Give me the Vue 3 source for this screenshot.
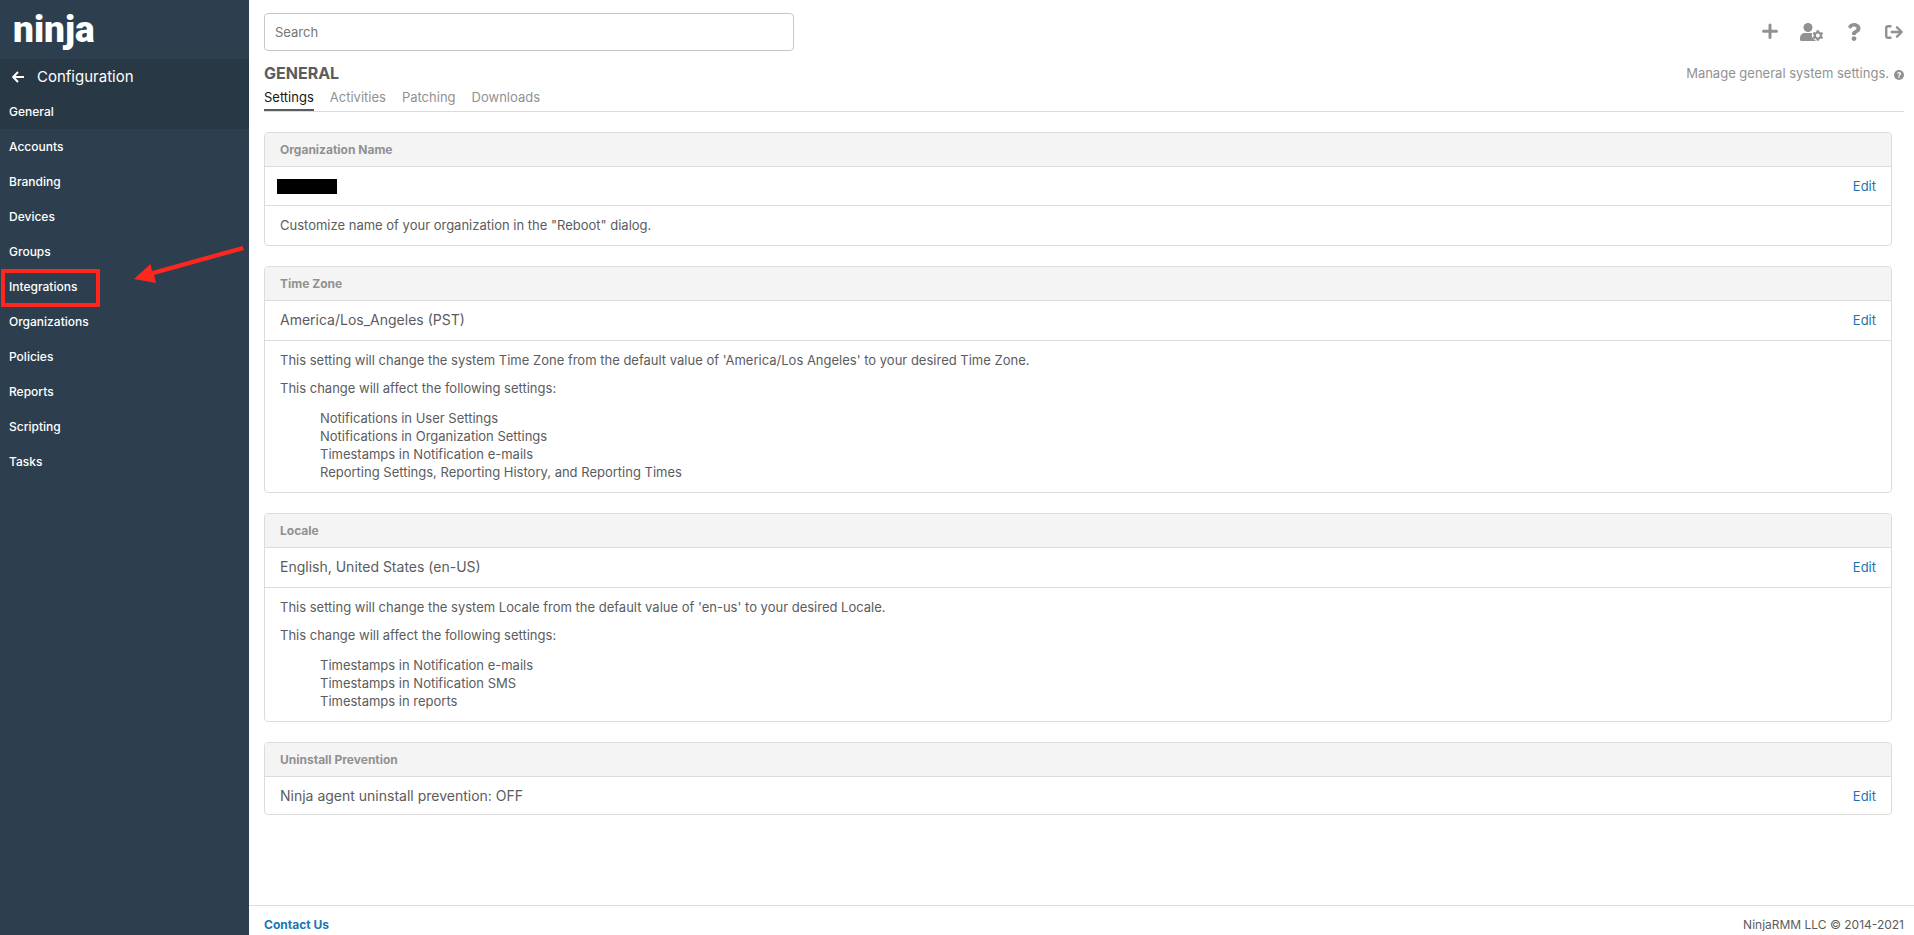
<script setup>
const navItems = [
  'General', 'Accounts', 'Branding', 'Devices', 'Groups', 'Integrations',
  'Organizations', 'Policies', 'Reports', 'Scripting', 'Tasks',
]
const tabs = ['Settings', 'Activities', 'Patching', 'Downloads']
const cards = [
  {
    title: 'Organization Name',
    redacted: true,
    paragraphs: ['Customize name of your organization in the "Reboot" dialog.'],
  },
  {
    title: 'Time Zone',
    value: 'America/Los_Angeles (PST)',
    paragraphs: [
      "This setting will change the system Time Zone from the default value of 'America/Los Angeles' to your desired Time Zone.",
      'This change will affect the following settings:',
    ],
    list: [
      'Notifications in User Settings',
      'Notifications in Organization Settings',
      'Timestamps in Notification e-mails',
      'Reporting Settings, Reporting History, and Reporting Times',
    ],
  },
  {
    title: 'Locale',
    value: 'English, United States (en-US)',
    paragraphs: [
      "This setting will change the system Locale from the default value of 'en-us' to your desired Locale.",
      'This change will affect the following settings:',
    ],
    list: [
      'Timestamps in Notification e-mails',
      'Timestamps in Notification SMS',
      'Timestamps in reports',
    ],
  },
  { title: 'Uninstall Prevention', value: 'Ninja agent uninstall prevention: OFF' },
]
const questionPath = 'M202 0C122 0 70.500 32.700 29.900 91c-7.400 10.600-5.100 25.100 5.200 32.900l43.100 32.700c10.400 7.900 25.100 6 33.300-4.100 25-31.400 43.600-49.500 82.700-49.500 30.800 0 68.800 19.800 68.800 49.600 0 22.600-18.600 34.200-49 51.200-35.400 19.900-82.300 44.600-82.300 106.400V320c0 13.300 10.700 24 24 24h72.500c13.300 0 24-10.700 24-24v-5.800c0-42.900 125.300-44.600 125.300-160.600C377.500 66.300 286.900 0 202 0zM192 373.500c-38.200 0-69.300 31-69.300 69.200S153.800 512 192 512s69.300-31.100 69.300-69.300-31.100-69.200-69.300-69.200z'
</script>

<template>
  <div class="app">
    <aside class="sidebar">
      <div class="brand">ninja</div>
      <nav aria-label="Configuration">
        <a class="back" href="#">
          <svg width="12" height="12" viewBox="0 0 12 12" aria-hidden="true">
            <path d="M6 1L1.200 6L6 11M1.500 6H12" />
          </svg>
          <span>Configuration</span>
        </a>
        <ul class="nav-list">
          <li v-for="item in navItems" :key="item" :class="{ active: item === 'General' }">
            <a href="#">{{ item }}</a>
            <template v-if="item === 'Integrations'">
              <span class="mark-box"></span>
              <svg class="mark-arrow" width="110" height="38" viewBox="0 0 110 38" aria-hidden="true">
                <path d="M0 33L16.500 18L18 25L108.500 0L110 4L20 29L22 37z" />
              </svg>
            </template>
          </li>
        </ul>
      </nav>
    </aside>

    <div class="page">
      <header class="topbar">
        <input class="search" type="search" placeholder="Search" aria-label="Search">
        <div class="actions">
          <button type="button" aria-label="Add">
            <svg width="16" height="18" viewBox="0 0 16 18"><path class="line" d="M8 2V14.500M1.500 8.200H14.500" /></svg>
          </button>
          <button type="button" aria-label="User settings">
            <svg width="24" height="18" viewBox="0 0 24 18">
              <circle cx="8" cy="4.500" r="4.500" />
              <path d="M4.700 10H10.800C11.200 10 11.600 10.100 12 10.200C11.500 12.500 12 14.500 13.500 16L15.500 17V18H1.500Q0 18 0 16.500V14.700A4.700 4.700 0 0 1 4.700 10z" />
              <path fill-rule="evenodd" d="M16.700 7.200H19L19.400 8.800L20.400 9.400L22 8.900L23.100 10.800L21.900 11.900V13L23.100 14.200L22 16.100L20.400 15.600L19.400 16.200L19 17.800H16.700L16.300 16.200L15.300 15.600L13.700 16.100L12.600 14.200L13.800 13V11.900L12.600 10.800L13.700 8.900L15.300 9.400L16.300 8.800zM17.850 10.600A1.900 1.900 0 1 0 17.850 14.400A1.900 1.900 0 1 0 17.850 10.600z" />
            </svg>
          </button>
          <button type="button" aria-label="Help">
            <svg width="16" height="18" viewBox="0 0 384 512"><path :d="questionPath" /></svg>
          </button>
          <button type="button" aria-label="Sign out">
            <svg width="20" height="14" viewBox="-1 0 20 14">
              <path class="line thin" d="M5.500 1.200H3Q1.200 1.200 1.200 3V11Q1.200 12.800 3 12.800H5.500M6.800 7H16.500M12 2.300L16.700 7L12 11.700" />
            </svg>
          </button>
        </div>
      </header>

      <div class="heading">
        <h1>GENERAL</h1>
        <p class="hint">
          Manage general system settings.
          <svg width="10" height="10" viewBox="0 0 10 10" aria-hidden="true">
            <circle cx="5" cy="5" r="5" />
            <g class="hint-mark" transform="translate(2.900 2) scale(.0112 .0117)"><path :d="questionPath" /></g>
          </svg>
        </p>
      </div>

      <nav class="tabs" aria-label="General sections">
        <a v-for="tab in tabs" :key="tab" href="#" :class="{ current: tab === 'Settings' }">{{ tab }}</a>
      </nav>

      <main class="cards">
        <section v-for="card in cards" :key="card.title" class="card">
          <h2>{{ card.title }}</h2>
          <div class="row" :class="{ compact: card.redacted }">
            <span v-if="card.redacted" class="redacted"></span>
            <span v-else>{{ card.value }}</span>
            <a href="#">Edit</a>
          </div>
          <div v-if="card.paragraphs" class="description">
            <p v-for="text in card.paragraphs" :key="text">{{ text }}</p>
            <ul v-if="card.list">
              <li v-for="entry in card.list" :key="entry">{{ entry }}</li>
            </ul>
          </div>
        </section>
      </main>

      <footer class="footer">
        <a href="#">Contact Us</a>
        <span>NinjaRMM LLC © 2014-2021</span>
      </footer>
    </div>
  </div>
</template>

<style>
body {
  margin: 0;
  background: #fff;
}
</style>

<style scoped>
.app {
  display: flex;
  min-height: 100vh;
  font-family: Inter, "Liberation Sans", sans-serif;
  font-size: 13px;
  line-height: 18px;
  color: #5b5c5e;
}
.app * {
  box-sizing: border-box;
}
a {
  text-decoration: none;
}
ul {
  list-style: none;
  margin: 0;
  padding: 0;
}
.sidebar {
  flex: 0 0 249px;
  background: #2d3f4e;
  color: #fff;
}
.brand {
  height: 59px;
  padding: 0 13px;
  font-family: Roboto, sans-serif;
  font-size: 37px;
  font-weight: 900;
  line-height: 59px;
}
.back {
  display: flex;
  align-items: center;
  gap: 13px;
  height: 35px;
  padding: 0 12px;
  background: #293845;
  color: #fff;
  font-size: 15px;
}
.back path {
  fill: none;
  stroke: #fff;
  stroke-width: 2;
}
.nav-list li {
  position: relative;
}
.nav-list a {
  display: block;
  padding: 0 9px;
  color: #fff;
  font-size: 12px;
  font-weight: 500;
  line-height: 35px;
}
.nav-list .active {
  background: #293845;
}
.mark-box {
  position: absolute;
  top: 0;
  left: 1px;
  width: 99px;
  height: 38px;
  border: 4px solid #ff271d;
  pointer-events: none;
}
.mark-arrow {
  position: absolute;
  top: -23px;
  left: 134px;
  fill: #ff271d;
  pointer-events: none;
}
.page {
  flex: 1;
  min-width: 0;
  display: flex;
  flex-direction: column;
  padding-top: 13px;
}
.topbar {
  display: flex;
  align-items: center;
  justify-content: space-between;
  padding: 0 10px 0 15px;
}
.search {
  width: 530px;
  height: 38px;
  padding: 0 10px;
  border: 1px solid #c7c7c7;
  border-radius: 4px;
  background: #fff;
  font: inherit;
  color: #5b5c5e;
}
.search::placeholder {
  color: #757575;
  opacity: 1;
}
.actions {
  display: flex;
  align-items: center;
  gap: 22px;
}
.actions button {
  display: flex;
  padding: 0;
  border: 0;
  background: none;
  color: #919191;
}
.actions svg {
  fill: currentColor;
}
.actions .line {
  fill: none;
  stroke: currentColor;
  stroke-width: 3;
  stroke-linecap: round;
  stroke-linejoin: round;
}
.actions .thin {
  stroke-width: 2.4;
}
.heading {
  display: flex;
  align-items: center;
  justify-content: space-between;
  margin-top: 12px;
  padding: 0 10px 0 15px;
}
h1 {
  margin: 0;
  font-size: 16px;
  font-weight: 700;
  line-height: 20px;
}
.hint {
  display: flex;
  align-items: center;
  gap: 5px;
  margin: 0;
  color: #919191;
}
.hint svg {
  margin-top: 3px;
  fill: #919191;
}
.hint-mark {
  fill: #fff;
}
.tabs {
  display: flex;
  gap: 16px;
  margin: 0 10px 0 15px;
  border-bottom: 1px solid #dcdcdc;
}
.tabs a {
  padding: 5px 0 3px;
  border-bottom: 2px solid transparent;
  color: #919191;
}
.tabs .current {
  border-color: #5b5c5e;
  color: #151515;
}
.cards {
  flex: 1;
  display: flex;
  flex-direction: column;
  gap: 20px;
  padding: 20px 22px 20px 15px;
}
.card {
  border: 1px solid #dcdcdc;
  border-radius: 4px;
  overflow: hidden;
}
h2 {
  margin: 0;
  padding: 0 15px;
  border-bottom: 1px solid #dcdcdc;
  background: #f4f4f4;
  color: #919191;
  font-size: 12px;
  font-weight: 700;
  line-height: 33px;
}
.row {
  display: flex;
  align-items: center;
  justify-content: space-between;
  min-height: 39px;
  padding: 0 15px 2px;
  font-size: 14px;
}
.row.compact {
  min-height: 38px;
  padding-bottom: 0;
}
.row:last-child {
  min-height: 37px;
  padding-bottom: 0;
}
.row a {
  color: #1976b5;
  font-size: 13px;
}
.redacted {
  width: 60px;
  height: 15px;
  margin-left: -3px;
  background: #000;
}
.description {
  padding: 10px 15px 11px;
  border-top: 1px solid #dcdcdc;
}
.description p {
  margin: 0;
}
.description p + p {
  margin-top: 10px;
}
.description ul {
  margin-top: 12px;
  padding-left: 40px;
}
.footer {
  display: flex;
  align-items: center;
  justify-content: space-between;
  height: 30px;
  padding: 9px 10px 0 15px;
  border-top: 1px solid #dcdcdc;
  font-size: 12px;
}
.footer a {
  color: #1976b5;
  font-weight: 700;
}
</style>
